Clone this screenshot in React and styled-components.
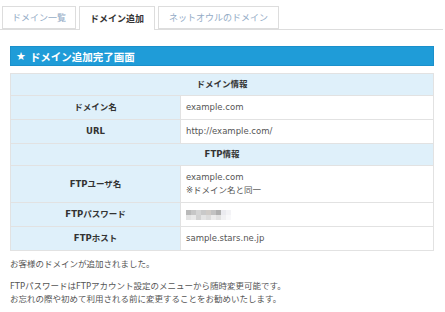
import styled, { createGlobalStyle } from 'styled-components';

const GlobalStyle = createGlobalStyle`
  body {
    margin: 0;
    background: #fff;
    font-family: "DejaVu Sans", "Noto Sans CJK JP", sans-serif;
    color: #555;
  }
`;

const Page = styled.div`
  width: 445px;
  height: 312px;
  overflow: hidden;
  padding-top: 6px;
  box-sizing: border-box;
`;

const TabBar = styled.div`
  display: flex;
  gap: 3px;
  padding-left: 2px;
  margin-right: 2px;
  border-bottom: 1px solid #dddddd;
  height: 23px;
`;

const Tab = styled.div`
  display: flex;
  align-items: center;
  padding: 0 ${(p) => p.$pad || 9}px;
  height: ${(p) => (p.$active ? 24 : 23)}px;
  box-sizing: border-box;
  border: 1px solid #dddddd;
  border-bottom: ${(p) => (p.$active ? 'none' : '1px solid #dddddd')};
  background: #fff;
  color: ${(p) => (p.$active ? '#333' : '#93abc6')};
  font-weight: ${(p) => (p.$active ? 'bold' : 'normal')};
  font-size: 9px;
`;

const Content = styled.div`
  padding: 0 11px 0 10px;
`;

const Heading = styled.h2`
  margin: 16px 0 0;
  height: 20px;
  box-sizing: border-box;
  display: flex;
  align-items: center;
  gap: 4px;
  padding-left: 5px;
  background: #1f9cd8;
  border: 1px solid #1b90cb;
  color: #fff;
  font-size: 10.5px;
  font-weight: bold;
`;

const Star = styled.span`
  font-size: 11px;
  line-height: 1;
`;

const Table = styled.table`
  margin-top: 7px;
  width: 100%;
  border-collapse: collapse;
  border: 1px solid #e2e2e2;
  font-size: 8.5px;
  line-height: 13px;
`;

const GroupHead = styled.th`
  background: #dff0fa;
  color: #333;
  font-weight: bold;
  padding: 4px 0;
  border: 1px solid #e2e2e2;
`;

const Label = styled.th`
  width: 169px;
  background: #dff0fa;
  color: #333;
  font-weight: bold;
  padding: 5px 0;
  border: 1px solid #e2e2e2;
`;

const Value = styled.td`
  background: #fff;
  color: #555;
  padding: 5px 5px;
  border: 1px solid #e2e2e2;
`;

const Note = styled.p`
  margin: ${(p) => p.$top || 7}px 0 0;
  font-size: 8.5px;
  line-height: 13px;
  color: #555;
`;

const mosaic = [
  ['#b9b9b9', '#c6c6c6', '#d4d4d4', '#c9c9c9', '#cfcbc7', '#c2c2c2', '#afafaf', '#ebebf0', '#f3f3f6'],
  ['#e3e3e3', '#e9e9e9', '#d2d2d2', '#e4e4e4', '#dcdcdc', '#ececec', '#e2e2e2', '#f1f1f3', '#f8f8fa'],
];

const Masked = () => (
  <svg width="45" height="10" viewBox="0 0 45 10" style={{ display: 'block' }}>
    {mosaic.map((row, r) =>
      row.map((c, i) => <rect key={`${r}-${i}`} x={i * 5} y={r * 5} width="5" height="5" fill={c} />)
    )}
  </svg>
);

const App = () => {
  return (
    <Page>
      <GlobalStyle />
      <TabBar>
        <Tab $pad={9}>ドメイン一覧</Tab>
        <Tab $active $pad={10}>ドメイン追加</Tab>
        <Tab $pad={10}>ネットオウルのドメイン</Tab>
      </TabBar>
      <Content>
        <Heading>
          <Star>★</Star>ドメイン追加完了画面
        </Heading>
        <Table>
          <tbody>
            <tr>
              <GroupHead colSpan={2}>ドメイン情報</GroupHead>
            </tr>
            <tr>
              <Label>ドメイン名</Label>
              <Value>example.com</Value>
            </tr>
            <tr>
              <Label>URL</Label>
              <Value>http://example.com/</Value>
            </tr>
            <tr>
              <GroupHead colSpan={2}>FTP情報</GroupHead>
            </tr>
            <tr>
              <Label>FTPユーザ名</Label>
              <Value>
                example.com
                <br />
                ※ドメイン名と同一
              </Value>
            </tr>
            <tr>
              <Label>FTPパスワード</Label>
              <Value>
                <Masked />
              </Value>
            </tr>
            <tr>
              <Label>FTPホスト</Label>
              <Value>sample.stars.ne.jp</Value>
            </tr>
          </tbody>
        </Table>
        <Note>お客様のドメインが追加されました。</Note>
        <Note $top={9}>
          FTPパスワードはFTPアカウント設定のメニューから随時変更可能です。
          <br />
          お忘れの際や初めて利用される前に変更することをお勧めいたします。
        </Note>
      </Content>
    </Page>
  );
};

export default App;
